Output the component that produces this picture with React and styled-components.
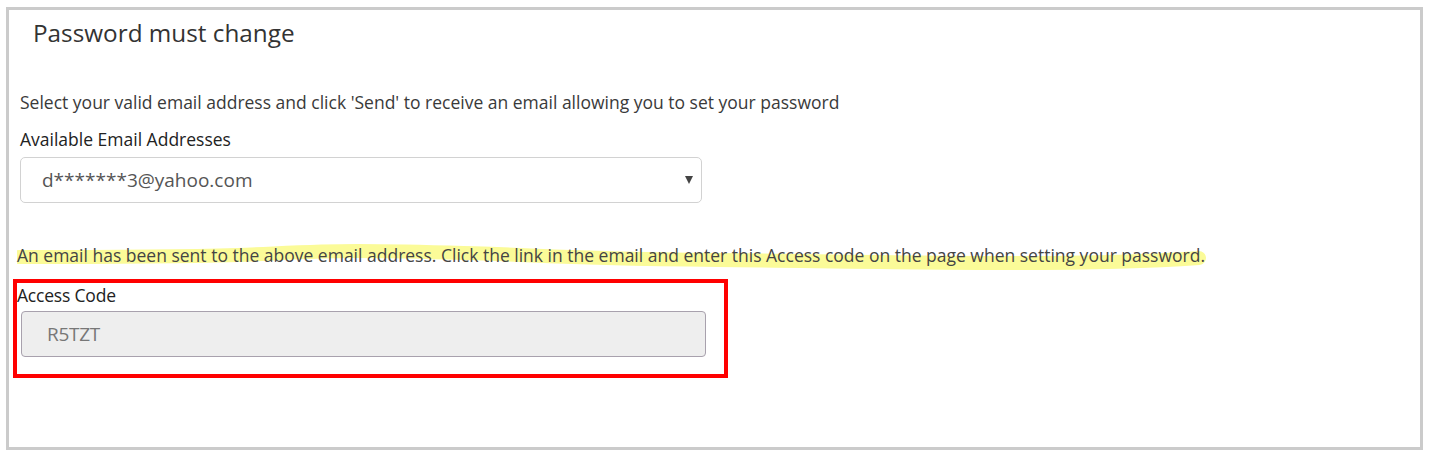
import React from "react";
import styled, { createGlobalStyle } from "styled-components";

const Global = createGlobalStyle`
  html, body { margin: 0; padding: 0; background: #fff; }
  body { font-family: "Open Sans", "Liberation Sans", sans-serif; color: #333; }
`;

const Panel = styled.div`
  box-sizing: border-box;
  margin: 7px 0 0 6px;
  width: 1417px;
  height: 443px;
  border: 3px solid #cbcbcb;
  padding: 0 11px 0 11px;
`;

const Title = styled.h2`
  margin: 0;
  padding: 6px 0 0 13px;
  font-size: 24.3px;
  font-weight: 400;
  line-height: 33px;
  color: #333;
`;

const Intro = styled.p`
  margin: 41px 0 0 0;
  font-size: 17.5px;
  line-height: 24px;
  color: #3a3a3a;
`;

const Label = styled.label`
  display: block;
  font-size: 17.5px;
  line-height: 24px;
  font-weight: 500;
  color: #222;
  margin-top: ${(p) => p.$mt || 0}px;
`;

const SelectBox = styled.div`
  box-sizing: border-box;
  margin-top: 6px;
  width: 682px;
  height: 46px;
  border: 1px solid #d2d2d2;
  border-radius: 5px;
  display: flex;
  align-items: center;
  justify-content: space-between;
  padding: 0 8px 0 21px;
  font-size: 19px;
  color: #555;
`;

const Caret = styled.svg`
  width: 8px;
  height: 10px;
  flex: none;
`;

const NoticeWrap = styled.div`
  position: relative;
  margin: 40px 0 0 -3px;
  width: max-content;
`;

const Highlight = styled.svg`
  position: absolute;
  left: 0;
  top: -10px;
  width: 1200px;
  height: 44px;
  pointer-events: none;
`;

const Notice = styled.p`
  position: relative;
  margin: 0;
  font-size: 17.5px;
  line-height: 24px;
  color: #444;
`;

const CodeFrame = styled.div`
  box-sizing: border-box;
  margin: 12px 0 0 -7px;
  width: 715px;
  height: 99px;
  border: 4px solid #ff0000;
  padding: 0 18px 0 0;
`;

const CodeLabel = styled.div`
  font-size: 17.5px;
  line-height: 24px;
  color: #222;
  letter-spacing: -0.2px;
`;

const CodeInput = styled.div`
  box-sizing: border-box;
  margin: 4px 0 0 4px;
  height: 46px;
  width: 685px;
  background: #eeeeee;
  border: 1px solid #a8a1ad;
  border-radius: 4px;
  display: flex;
  align-items: center;
  padding-left: 25px;
  font-size: 19px;
  color: #777;
  letter-spacing: -0.3px;
`;

export default function App() {
  return (
    <>
      <Global />
      <Panel>
        <Title>Password must change</Title>
        <Intro>
          Select your valid email address and click 'Send' to receive an email allowing you to set your password
        </Intro>
        <Label $mt={13}>Available Email Addresses</Label>
        <SelectBox>
          <span>d*******3@yahoo.com</span>
          <Caret viewBox="0 0 8 10">
            <path d="M0 1 L8 1 L4 9 Z" fill="#444" />
          </Caret>
        </SelectBox>
        <NoticeWrap>
          <Highlight viewBox="0 0 1200 44">
            <path
              d="M2 24 C 80 24, 150 24, 220 22 C 270 20, 300 18, 340 18 C 400 18, 440 20, 480 21 C 540 24, 600 26, 700 27 C 800 28, 900 30, 1000 30 C 1080 30, 1140 28, 1182 25"
              fill="none"
              stroke="#fbfb98"
              strokeWidth="14"
              strokeLinecap="round"
            />
          </Highlight>
          <Notice>
            An email has been sent to the above email address. Click the link in the email and enter this Access code on the page when setting your password.
          </Notice>
        </NoticeWrap>
        <CodeFrame>
          <CodeLabel>Access Code</CodeLabel>
          <CodeInput>R5TZT</CodeInput>
        </CodeFrame>
      </Panel>
    </>
  );
}
